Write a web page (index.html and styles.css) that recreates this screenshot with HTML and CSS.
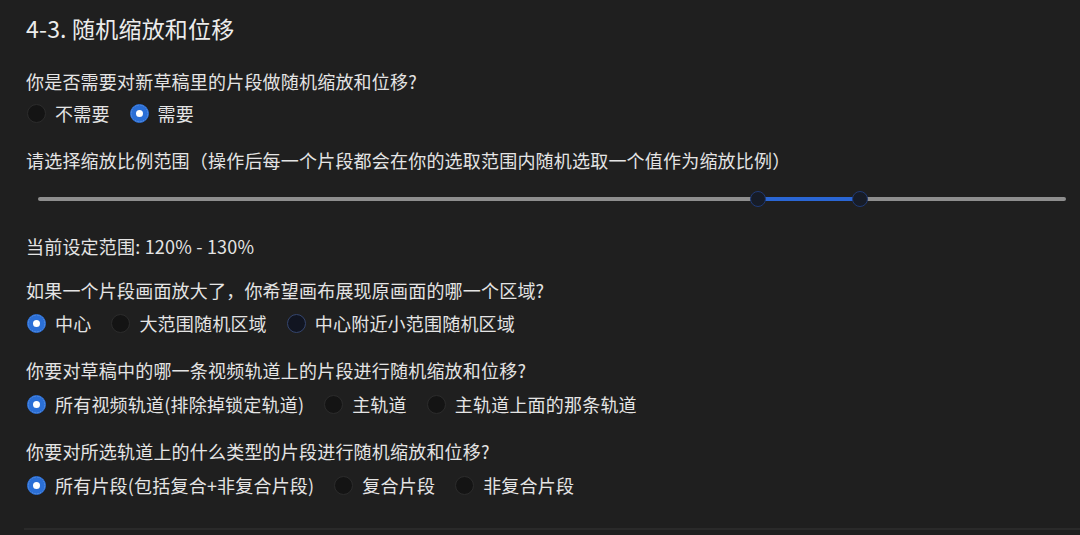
FILE: index.html
```html
<!DOCTYPE html>
<html lang="zh-CN">
    <head>
        <meta charset="utf-8">
        <title>随机缩放和位移</title>
        <link rel="stylesheet" href="styles.css">
    </head>
    <body>
        <div class="panel">
            <h2 class="title">4-3. 随机缩放和位移</h2>

            <div class="group group-need">
                <p class="question">你是否需要对新草稿里的片段做随机缩放和位移?</p>
                <div class="options">
                    <label class="option"><input type="radio" name="need"><span>不需要</span></label>
                    <label class="option"><input type="radio" name="need" checked><span>需要</span></label>
                </div>
            </div>

            <div class="group group-scale">
                <p class="question">请选择缩放比例范围（操作后每一个片段都会在你的选取范围内随机选取一个值作为缩放比例）</p>
                <div class="slider">
                    <div class="track">
                        <div class="fill" style="left: 70%; width: 10%;"></div>
                        <span class="thumb" style="left: 70%;"></span>
                        <span class="thumb" style="left: 80%;"></span>
                    </div>
                </div>
            </div>

            <p class="question range-text">当前设定范围: 120% - 130%</p>

            <div class="group group-area">
                <p class="question">如果一个片段画面放大了，你希望画布展现原画面的哪一个区域?</p>
                <div class="options">
                    <label class="option"><input type="radio" name="area" checked><span>中心</span></label>
                    <label class="option"><input type="radio" name="area"><span>大范围随机区域</span></label>
                    <label class="option"><input type="radio" name="area" class="hover"><span>中心附近小范围随机区域</span></label>
                </div>
            </div>

            <div class="group">
                <p class="question">你要对草稿中的哪一条视频轨道上的片段进行随机缩放和位移?</p>
                <div class="options">
                    <label class="option"><input type="radio" name="track" checked><span>所有视频轨道(排除掉锁定轨道)</span></label>
                    <label class="option"><input type="radio" name="track"><span>主轨道</span></label>
                    <label class="option"><input type="radio" name="track"><span>主轨道上面的那条轨道</span></label>
                </div>
            </div>

            <div class="group">
                <p class="question">你要对所选轨道上的什么类型的片段进行随机缩放和位移?</p>
                <div class="options">
                    <label class="option"><input type="radio" name="kind" checked><span>所有片段(包括复合+非复合片段)</span></label>
                    <label class="option"><input type="radio" name="kind"><span>复合片段</span></label>
                    <label class="option"><input type="radio" name="kind"><span>非复合片段</span></label>
                </div>
            </div>

            <div class="divider"></div>
        </div>
    </body>
</html>
```

FILE: styles.css
```css
body{
    margin: 0;
    background-color: #1f1f1f;
    color: #e4e4e4;
    font-family: "Noto Sans CJK SC", "Noto Sans", sans-serif;
    letter-spacing: 0.2px;
}
.panel{
    padding: 14px 0 0 24px;
}
.title{
    margin: 0 0 0 2px;
    font-size: 23px;
    line-height: 28px;
    font-weight: 400;
    color: #ececec;
}
.group{
    margin-top: 23px;
}
.question{
    margin: 0 0 0 2px;
    font-size: 18px;
    line-height: 24px;
}
.options{
    display: flex;
    gap: 20px;
    margin: 10px 0 0 3px;
}
.group-need{
    margin-top: 27px;
}
.group-need .options{
    margin-top: 8px;
}
.group-scale{
    margin-top: 23px;
}
.group-area{
    margin-top: 20px;
}
.group-area .options{
    margin-top: 9px;
}
.option{
    display: flex;
    align-items: center;
    gap: 9px;
    font-size: 18px;
    line-height: 24px;
}
.option input{
    appearance: none;
    width: 19px;
    height: 19px;
    margin: 0;
    border-radius: 50%;
    background-color: #141414;
    border: 1px solid #2c2c2c;
    box-sizing: border-box;
}
.option input:checked{
    background-color: #2b6fd6;
    border-color: #2b6fd6;
    box-shadow: inset 0 0 0 5px #2b6fd6, inset 0 0 0 10px #ffffff;
}
.option input.hover{
    border-color: #34456e;
    background-color: #111521;
}
.slider{
    margin: 15px 14px 0 14px;
    height: 24px;
    display: flex;
    align-items: center;
}
.track{
    position: relative;
    width: 100%;
    height: 4px;
    border-radius: 2px;
    background-color: #8e8e8e;
}
.fill{
    position: absolute;
    top: 0;
    height: 4px;
    background-color: #2a66d4;
}
.thumb{
    position: absolute;
    top: 2px;
    width: 16px;
    height: 16px;
    margin: -8px 0 0 -8px;
    border-radius: 50%;
    background-color: #171c27;
    border: 1px solid #1f3a76;
    box-sizing: border-box;
}
.range-text{
    margin-top: 23px;
}
.divider{
    margin-top: 31px;
    height: 2px;
    background-color: #2a2a2a;
}
```
